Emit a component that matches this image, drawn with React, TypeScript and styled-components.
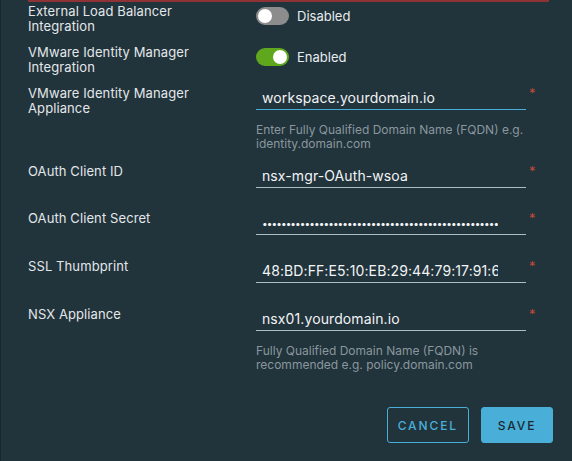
import styled, { createGlobalStyle } from "styled-components";

const GlobalStyle = createGlobalStyle`
  html, body {
    margin: 0;
    padding: 0;
    background: #21333b;
  }
  body {
    font-family: Inter, "Noto Sans", sans-serif;
    color: #e9ecef;
  }
  * { box-sizing: border-box; }
`;

const Page = styled.div`
  width: 572px;
  height: 461px;
  overflow: hidden;
  border-left: 1px solid #18262d;
  background: #21333b;
  display: flex;
  flex-direction: column;
`;

const TopBar = styled.div`
  height: 2px;
  width: 521px;
  margin-left: 27px;
  background: #8f3235;
`;

const Form = styled.div`
  display: flex;
  flex-direction: column;
  padding-left: 27px;
  padding-top: 2px;
`;

const Row = styled.div<{ $top: number }>`
  display: grid;
  grid-template-columns: 228px 270px 20px;
  margin-top: ${(p) => p.$top}px;
`;

const Label = styled.div`
  font-size: 13px;
  line-height: 15px;
  color: #e3e7ea;
  letter-spacing: 0.1px;
`;

const Control = styled.div`
  display: flex;
  flex-direction: column;
`;

const ToggleWrap = styled.label`
  display: flex;
  align-items: center;
  gap: 8px;
  margin-top: 3px;
  font-size: 13px;
  color: #e9ecef;
  height: 18px;
`;

const Track = styled.span<{ $on: boolean }>`
  position: relative;
  width: 33px;
  height: 18px;
  border-radius: 9px;
  background: ${(p) => (p.$on ? "#5fa81e" : "#8c8c8c")};
  flex: none;
`;

const Knob = styled.span<{ $on: boolean }>`
  position: absolute;
  top: 2px;
  left: ${(p) => (p.$on ? "17px" : "2px")};
  width: 14px;
  height: 14px;
  border-radius: 50%;
  background: #ffffff;
`;

const Input = styled.div<{ $focus?: boolean }>`
  height: 24px;
  padding: 0 28px 0 6px;
  display: flex;
  align-items: center;
  border-bottom: 1px solid ${(p) => (p.$focus ? "#49afd9" : "#aebcc4")};
`;

const Value = styled.span<{ $secret?: boolean }>`
  flex: 1;
  overflow: hidden;
  white-space: nowrap;
  font-size: ${(p) => (p.$secret ? "10px" : "14px")};
  letter-spacing: ${(p) => (p.$secret ? "-0.9px" : "0.1px")};
  color: #f2f4f5;
`;

const Helper = styled.div`
  margin-top: 13px;
  font-size: 12px;
  line-height: 14px;
  color: #8a979e;
`;

const Required = styled.span`
  color: #c0493c;
  font-size: 13px;
  line-height: 13px;
  padding-left: 3px;
  margin-top: 1px;
`;

const Footer = styled.div`
  display: flex;
  justify-content: flex-end;
  gap: 12px;
  padding-right: 19px;
  margin-top: 35px;
`;

const Button = styled.button<{ $primary?: boolean }>`
  height: 36px;
  padding: 0 10px;
  min-width: 72px;
  border-radius: 3px;
  border: 1px solid #49afd9;
  background: ${(p) => (p.$primary ? "#49afd9" : "transparent")};
  color: ${(p) => (p.$primary ? "#1b2a32" : "#49afd9")};
  font-family: Inter, "Noto Sans", sans-serif;
  font-size: 12px;
  font-weight: 500;
  letter-spacing: 1.9px;
  cursor: pointer;
`;

function Toggle({ on }: { on: boolean }) {
  return (
    <ToggleWrap>
      <Track $on={on}>
        <Knob $on={on} />
      </Track>
      {on ? "Enabled" : "Disabled"}
    </ToggleWrap>
  );
}

export default function App() {
  return (
    <>
      <GlobalStyle />
      <Page>
        <TopBar />
        <Form>
          <Row $top={0}>
            <Label>External Load Balancer<br />Integration</Label>
            <Control><Toggle on={false} /></Control>
          </Row>
          <Row $top={11}>
            <Label>VMware Identity Manager<br />Integration</Label>
            <Control><Toggle on /></Control>
          </Row>
          <Row $top={11}>
            <Label>VMware Identity Manager<br />Appliance</Label>
            <Control>
              <Input $focus><Value>workspace.yourdomain.io</Value></Input>
              <Helper>Enter Fully Qualified Domain Name (FQDN) e.g.<br />identity.domain.com</Helper>
            </Control>
            <Required>*</Required>
          </Row>
          <Row $top={13}>
            <Label>OAuth Client ID</Label>
            <Control><Input><Value>nsx-mgr-OAuth-wsoa</Value></Input></Control>
            <Required>*</Required>
          </Row>
          <Row $top={23}>
            <Label>OAuth Client Secret</Label>
            <Control><Input><Value $secret>{"•".repeat(90)}</Value></Input></Control>
            <Required>*</Required>
          </Row>
          <Row $top={24}>
            <Label>SSL Thumbprint</Label>
            <Control><Input><Value>48:BD:FF:E5:10:EB:29:44:79:17:91:6B:9C:3A:21:7F</Value></Input></Control>
            <Required>*</Required>
          </Row>
          <Row $top={24}>
            <Label>NSX Appliance</Label>
            <Control>
              <Input><Value>nsx01.yourdomain.io</Value></Input>
              <Helper>Fully Qualified Domain Name (FQDN) is<br />recommended e.g. policy.domain.com</Helper>
            </Control>
            <Required>*</Required>
          </Row>
        </Form>
        <Footer>
          <Button>CANCEL</Button>
          <Button $primary>SAVE</Button>
        </Footer>
      </Page>
    </>
  );
}
